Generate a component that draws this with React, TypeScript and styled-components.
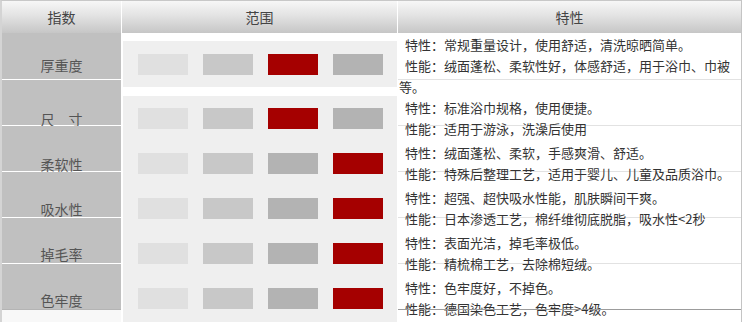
import React from "react";
import styled, { createGlobalStyle } from "styled-components";

const GlobalStyle = createGlobalStyle`
   html, body {
      margin: 0;
      padding: 0;
      overflow: hidden;
      background: #fff;
   }
   body {
      font-family: "Noto Sans CJK SC", "Noto Sans", sans-serif;
   }
`;

const Table = styled.div`
   width: 739px;
   border-top: 1px solid #c8c8c8;
   border-left: 2px solid #d4d4d4;
   border-right: 1px solid #c4c4c4;
   background: #fff;
`;

const Row = styled.div<{ $height: number }>`
   display: grid;
   grid-template-columns: 119px 275px 343px;
   column-gap: 1px;
   height: ${({ $height }) => $height}px;
`;

const HeadCell = styled.div`
   display: flex;
   align-items: center;
   justify-content: center;
   background: linear-gradient(to bottom, #f7f7f7 0%, #e3e3e3 45%, #c6c6c6 100%);
   color: #444;
   font-size: 14px;
`;

const NameColumn = styled.div`
   display: flex;
   flex-direction: column;
   background: #f8f8f8;
`;

const NameCell = styled.div<{ $height: number; $top: number; $last?: boolean }>`
   box-sizing: border-box;
   height: ${({ $height }) => $height + 1}px;
   padding-top: ${({ $top }) => $top}px;
   background: #c0c0c0;
   border-bottom: 1px solid ${({ $last }) => ($last ? "#b4b4b4" : "#fff")};
   color: #555;
   font-size: 14px;
   line-height: 20px;
   text-align: center;
`;

const RangeColumn = styled.div`
   display: flex;
   flex-direction: column;
   padding: 8px 0 0 1px;
   background: #fff;
`;

const Panel = styled.div<{ $grow?: boolean }>`
   display: flex;
   flex-direction: column;
   gap: 24px;
   background: #efefef;
   padding: ${({ $grow }) => ($grow ? "12px 14px 0 15px" : "13px 14px 12px 15px")};
   margin-bottom: ${({ $grow }) => ($grow ? 0 : 9)}px;
   flex: ${({ $grow }) => ($grow ? 1 : "none")};
`;

const BarRow = styled.div`
   display: flex;
   gap: 15px;
`;

const Bar = styled.div<{ $tone: string }>`
   width: 50px;
   height: 21px;
   background: ${({ $tone }) => $tone};
`;

const NoteColumn = styled.div`
   position: relative;
   padding-top: 1px;
   background-color: #fff;
   background-image: repeating-linear-gradient(
      to bottom,
      transparent 0,
      transparent 45px,
      #e2e2e2 45px,
      #e2e2e2 46px
   );
   background-position: 0 1px;
   color: #333;
   font-size: 13px;
   line-height: 21px;

   &::after {
      content: "";
      position: absolute;
      left: 0;
      right: 0;
      top: 276px;
      height: 1px;
      background: #9c9c9c;
   }
`;

const NoteBlock = styled.div`
   margin-bottom: 3px;
   &:first-child {
      margin-bottom: 0;
   }
`;

const NoteLine = styled.p`
   margin: 0;
   padding-left: 1px;
   text-indent: 6px;
`;

const tones = {
   light: "#e0e0e0",
   mid: "#c8c8c8",
   dark: "#b3b3b3",
   red: "#a50000",
};

interface Index {
   name: string;
   top: number;
   height: number;
   redLast: boolean;
   notes: string[];
}

const indexes: Index[] = [
   {
      name: "厚重度",
      top: 22,
      height: 45,
      redLast: false,
      notes: [
         "特性：常规重量设计，使用舒适，清洗晾晒简单。",
         "性能：绒面蓬松、柔软性好，体感舒适，用于浴巾、巾被等。",
      ],
   },
   {
      name: "尺　寸",
      top: 29,
      height: 45,
      redLast: false,
      notes: ["特性：标准浴巾规格，使用便捷。", "性能：适用于游泳，洗澡后使用"],
   },
   {
      name: "柔软性",
      top: 28,
      height: 45,
      redLast: true,
      notes: ["特性：绒面蓬松、柔软，手感爽滑、舒适。", "性能：特殊后整理工艺，适用于婴儿、儿童及品质浴巾。"],
   },
   {
      name: "吸水性",
      top: 27,
      height: 45,
      redLast: true,
      notes: ["特性：超强、超快吸水性能，肌肤瞬间干爽。", "性能：日本渗透工艺，棉纤维彻底脱脂，吸水性<2秒"],
   },
   {
      name: "掉毛率",
      top: 26,
      height: 45,
      redLast: true,
      notes: ["特性：表面光洁，掉毛率极低。", "性能：精梳棉工艺，去除棉短绒。"],
   },
   {
      name: "色牢度",
      top: 26,
      height: 45,
      redLast: true,
      notes: ["特性：色牢度好，不掉色。", "性能：德国染色工艺，色牢度>4级。"],
   },
];

const Bars: React.FC<{ redLast: boolean }> = ({ redLast }) => {
   const row = redLast
      ? [tones.light, tones.mid, tones.dark, tones.red]
      : [tones.light, tones.mid, tones.red, tones.dark];
   return (
      <BarRow>
         {row.map((tone, i) => (
            <Bar key={i} $tone={tone} />
         ))}
      </BarRow>
   );
};

const App: React.FC = () => {
   const [first, ...rest] = indexes;
   return (
      <>
         <GlobalStyle />
         <Table>
            <Row $height={32}>
               <HeadCell>指数</HeadCell>
               <HeadCell>范围</HeadCell>
               <HeadCell>特性</HeadCell>
            </Row>
            <Row $height={289}>
               <NameColumn>
                  {indexes.map((item, i) => (
                     <NameCell
                        key={item.name}
                        $height={i === 0 ? 46 : item.height}
                        $top={item.top}
                        $last={i === indexes.length - 1}
                     >
                        {item.name}
                     </NameCell>
                  ))}
               </NameColumn>
               <RangeColumn>
                  <Panel>
                     <Bars redLast={first.redLast} />
                  </Panel>
                  <Panel $grow>
                     {rest.map((item) => (
                        <Bars key={item.name} redLast={item.redLast} />
                     ))}
                  </Panel>
               </RangeColumn>
               <NoteColumn>
                  {indexes.map((item) => (
                     <NoteBlock key={item.name}>
                        {item.notes.map((note) => (
                           <NoteLine key={note}>{note}</NoteLine>
                        ))}
                     </NoteBlock>
                  ))}
               </NoteColumn>
            </Row>
         </Table>
      </>
   );
};

export default App;
